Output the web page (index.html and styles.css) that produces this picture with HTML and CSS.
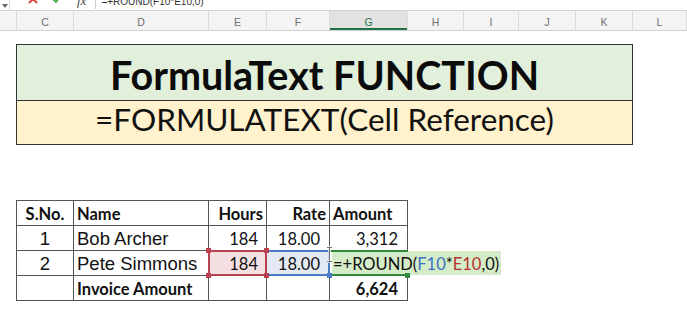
FILE: index.html
```html
<!DOCTYPE html>
<html lang="en">
<head>
<meta charset="utf-8">
<title>FormulaText Function</title>
<link rel="stylesheet" href="styles.css">
</head>
<body>
<div class="app">
  <div class="fbar">
    <div class="fb-drop"><svg width="6" height="4" viewBox="0 0 6 4"><path d="M0 0h6L3 4z" fill="#6a6a6a"/></svg></div>
    <div class="fb-x"><svg width="10" height="10" viewBox="0 0 10 10"><path d="M1.5 1.5L8.5 8.5M8.5 1.5L1.5 8.5" stroke="#d8443c" stroke-width="2" stroke-linecap="round"/></svg></div>
    <div class="fb-ok"><svg width="10" height="10" viewBox="0 0 10 10"><path d="M1.5 5.5L4 8L8.5 2" stroke="#4fae4a" stroke-width="2" fill="none" stroke-linecap="round" stroke-linejoin="round"/></svg></div>
    <div class="fb-fx">fx</div>
    <div class="fb-sep"></div>
    <div class="fb-text">=+ROUND(F10*E10,0)</div>
  </div>

  <div class="colhdr">
    <div class="ch"></div>
    <div class="ch">C</div>
    <div class="ch">D</div>
    <div class="ch">E</div>
    <div class="ch">F</div>
    <div class="ch sel">G</div>
    <div class="ch">H</div>
    <div class="ch">I</div>
    <div class="ch">J</div>
    <div class="ch">K</div>
    <div class="ch">L</div>
  </div>

  <div class="sheet">
    <div class="titlebox">
      <div class="t1">FormulaText FUNCTION</div>
      <div class="t2">=FORMULATEXT(Cell Reference)</div>
    </div>

    <div class="tbl">
      <div class="cell cal b ctr">S.No.</div>
      <div class="cell cal b">Name</div>
      <div class="cell cal b rt">Hours</div>
      <div class="cell cal b rt">Rate</div>
      <div class="cell cal b">Amount</div>

      <div class="cell ari ctr">1</div>
      <div class="cell ari">Bob Archer</div>
      <div class="cell cal rt num">184</div>
      <div class="cell cal rt num2">18.00</div>
      <div class="cell cal rt num2">3,312</div>

      <div class="cell ari ctr">2</div>
      <div class="cell ari">Pete Simmons</div>
      <div class="cell cal rt num ref-red">184
        <span class="hdl red tl"></span><span class="hdl red tr"></span><span class="hdl red bl"></span><span class="hdl red br"></span>
      </div>
      <div class="cell cal rt num2 ref-blue">18.00
        <span class="hdl blue br"></span>
      </div>
      <div class="cell cal editing">
        <span class="ftext">=+ROUND(<span class="rb">F10</span>*<span class="rr">E10</span>,0)</span>
        <span class="hdl green br"></span>
        <svg class="ibeam" width="7" height="17" viewBox="0 0 7 17"><path d="M1 1.5h5M3.5 1.5v14M1 15.5h5" stroke="#fff" stroke-width="2.4" fill="none"/><path d="M1 1.5h5M3.5 1.5v14M1 15.5h5" stroke="#6f6f6f" stroke-width="1" fill="none"/></svg>
      </div>

      <div class="cell"></div>
      <div class="cell cal b">Invoice Amount</div>
      <div class="cell"></div>
      <div class="cell"></div>
      <div class="cell cal b rt num2">6,624</div>
    </div>
  </div>
</div>
</body>
</html>
```
FILE: styles.css
```css
* { box-sizing: border-box; }
html, body { margin: 0; padding: 0; background: #fff; }
body {
  width: 687px;
  height: 327px;
  overflow: hidden;
  font-family: "Liberation Sans", Arial, sans-serif;
  color: #111;
}

/* formula bar (cut off at the top) */
.fbar {
  display: flex;
  align-items: flex-end;
  height: 11px;
  border-bottom: 1px solid #d3d3d3;
  overflow: hidden;
  background: #fff;
}
.fb-drop {
  align-self: stretch;
  width: 10px;
  border-right: 1px solid #d8d8d8;
  display: flex;
  align-items: center;
  justify-content: center;
  padding-top: 1px;
}
.fb-drop svg { display: block; }
.fb-x { margin-left: 18px; margin-bottom: 6px; height: 10px; }
.fb-ok { margin-left: 14px; margin-bottom: 6px; height: 10px; }
.fb-x svg, .fb-ok svg { display: block; }
.fb-fx {
  margin-left: 15px;
  margin-bottom: 3px;
  font: italic 13px/13px "Liberation Serif", serif;
  color: #444;
}
.fb-sep {
  align-self: flex-start;
  margin-left: 9px;
  width: 1px;
  height: 9px;
  background: #cfcfcf;
}
.fb-text {
  margin-left: 5px;
  margin-bottom: 3px;
  font-size: 10px;
  line-height: 11px;
  color: #333;
  white-space: nowrap;
}

/* column headers */
.colhdr {
  display: grid;
  grid-template-columns: 17px 57px 135px 58px 63px 78px 56px 55px 57px 57px 54px;
  height: 20px;
  background: #f4f4f4;
  border-bottom: 1px solid #d2d2d2;
}
.ch {
  border-right: 1px solid #dcdcdc;
  display: flex;
  align-items: center;
  justify-content: center;
  padding-top: 2px;
  font-size: 10.5px;
  color: #6e6e6e;
}
.ch.sel {
  background: #e2e2e2;
  color: #217346;
  box-shadow: inset 0 -2px 0 #217346;
}

/* sheet body */
.sheet {
  padding: 13px 0 0 16px;
}
.titlebox {
  width: 617px;
  border: 1px solid #333;
}
.t1 {
  height: 56px;
  border-bottom: 1px solid #333;
  background: #e2efda;
  padding-top: 5px;
  text-align: center;
  font: 700 39.5px/50px "Lato", "Liberation Sans", sans-serif;
  color: #0b0b0b;
  white-space: nowrap;
}
.t2 {
  height: 43px;
  background: #fff2cc;
  text-align: center;
  font: 400 31.5px/37.6px "Lato", "Liberation Sans", sans-serif;
  color: #111;
  white-space: nowrap;
}

/* data table */
.tbl {
  margin-top: 55px;
  display: grid;
  grid-template-columns: 57px 135px 58px 63px 78px;
  grid-auto-rows: 25px;
  width: 392px;
  border-left: 1px solid #555;
  border-top: 1px solid #555;
}
.cell {
  border-right: 1px solid #555;
  border-bottom: 1px solid #555;
  padding: 0 3px 1px 3px;
  display: flex;
  align-items: flex-end;
  white-space: nowrap;
  line-height: 20px;
}
.cal { font-family: "Lato", "Liberation Sans", sans-serif; font-size: 16.5px; }
.ari { font-family: "Liberation Sans", Arial, sans-serif; font-size: 18.5px; }
.b { font-weight: 700; }
.ctr { justify-content: center; }
.rt { justify-content: flex-end; }
.num { padding-right: 8px; }
.num2 { padding-right: 9px; }

/* formula reference highlights */
.ref-red { position: relative; background: #f4e0e3; }
.ref-red::after {
  content: "";
  position: absolute;
  top: -1px; left: -1px; right: -1px; bottom: -1px;
  border: 2px solid #b8404f;
}
.ref-blue { position: relative; background: #e4eaf5; }
.ref-blue::after {
  content: "";
  position: absolute;
  top: -1px; left: 0; right: -1px; bottom: -1px;
  border: 2px solid #4a7bc4;
  border-left: 0;
}
.editing {
  position: relative;
  padding: 0;
  align-items: stretch;
}
.editing::after {
  content: "";
  position: absolute;
  top: -1px; left: 0; right: -1px; bottom: -1px;
  border-top: 2px solid #2f8a3c;
  border-bottom: 2px solid #2f8a3c;
}
.ftext {
  margin-left: 2px;
  padding: 0 2px 1px 1px;
  background: #d5ecc8;
  display: flex;
  align-items: flex-end;
  color: #111;
}
.rb { color: #3b72c2; }
.rr { color: #b83232; }

.hdl {
  position: absolute;
  width: 5px;
  height: 5px;
  z-index: 2;
}
.hdl.red { background: #b8404f; }
.hdl.blue { background: #4a7bc4; }
.hdl.green { background: #2f8a3c; }
.hdl.tl { left: -3px; top: -3px; }
.hdl.tr { right: -3px; top: -3px; }
.hdl.bl { left: -3px; bottom: -3px; }
.hdl.br { right: -3px; bottom: -3px; }

.ibeam {
  position: absolute;
  left: -4px;
  top: -5px;
  z-index: 3;
}
```
